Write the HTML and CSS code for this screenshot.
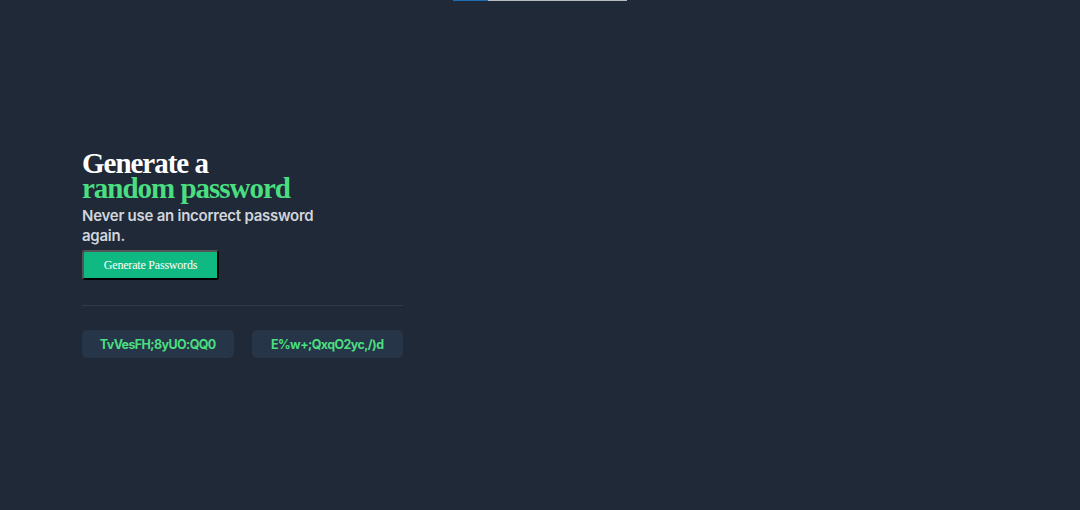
FILE: index.html
```html
<!DOCTYPE html>
<html lang="en">
<head>
    <meta charset="UTF-8">
    <meta name="viewport" content="width=device-width, initial-scale=1.0">
    <title>Password Generator</title>
    <link rel="stylesheet" href="styles.css">
</head>
<body>
    <div class="topbar"><span class="topbar-fill"></span></div>

    <main class="container">
        <h1>Generate a<br><span>random password</span></h1>
        <p class="subtitle">Never use an incorrect password again.</p>
        <button class="generate">Generate Passwords</button>

        <hr>

        <div class="passwords">
            <div class="password">TvVesFH;8yUO:QQ0</div>
            <div class="password">E%w+;QxqO2yc,/)d</div>
        </div>
    </main>
</body>
</html>
```

FILE: styles.css
```css
body {
    margin: 0;
    padding: 0;
    background: #1f2937;
    height: 510px;
    overflow: hidden;
}
.topbar {
    position: absolute;
    top: 0;
    left: 453px;
    width: 174px;
    height: 1px;
    background: #b8bcc2;
}
.topbar-fill {
    display: block;
    width: 35px;
    height: 100%;
    background: #1f6db3;
}
.container {
    width: 321px;
    padding: 151px 0 0 82px;
}
h1 {
    font-family: "Liberation Serif", "Times New Roman", serif;
    font-weight: bold;
    font-size: 29px;
    line-height: 25px;
    letter-spacing: -0.035em;
    color: #ffffff;
    margin: 0;
}
h1 span {
    color: #4ade80;
}
.subtitle {
    font-family: Inter, "Noto Sans", sans-serif;
    font-weight: 600;
    font-size: 15px;
    line-height: 20px;
    letter-spacing: -0.25px;
    color: #d1d5db;
    width: 240px;
    margin: 5px 0 4px;
}
.generate {
    font-family: "Liberation Serif", "Times New Roman", serif;
    font-size: 12px;
    letter-spacing: -0.2px;
    color: #fff;
    background: #10b981;
    width: 137px;
    height: 30px;
    border-radius: 3px;
}
hr {
    border: none;
    border-top: 1px solid #2d3b4f;
    margin: 25px 0 24px;
}
.passwords {
    display: flex;
    gap: 18px;
}
.password {
    flex: 1;
    height: 28px;
    background: #273549;
    border-radius: 5px;
    font-family: Inter, "Noto Sans", sans-serif;
    font-weight: bold;
    font-size: 12.5px;
    letter-spacing: -0.6px;
    color: #4ade80;
    display: flex;
    align-items: center;
    justify-content: center;
}
```
